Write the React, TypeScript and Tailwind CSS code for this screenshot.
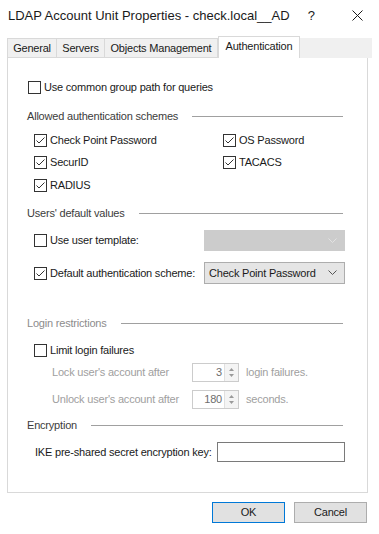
import React from "react";

const FONT = { fontFamily: '"Liberation Sans", Arial, sans-serif' };
const T = "text-[11px] tracking-[-0.2px] leading-none whitespace-nowrap";

function Box({ checked }: { checked?: boolean }) {
  return (
    <div className="w-[13px] h-[13px] border border-[#333333] bg-white shrink-0 flex items-center justify-center">
      {checked && (
        <svg width="11" height="11" viewBox="0 0 11 11">
          <polyline points="1.5,5.5 4,8 9.5,2.5" fill="none" stroke="#333333" strokeWidth="1" />
        </svg>
      )}
    </div>
  );
}

function Check({ label, checked, className = "" }: { label: string; checked?: boolean; className?: string }) {
  return (
    <div className={"flex items-center gap-[3px] " + className}>
      <Box checked={checked} />
      <span className={T + " text-[#1a1a1a]"}>{label}</span>
    </div>
  );
}

function Header({ label, className = "", textClass = "text-[#3c3c3c]" }: { label: string; className?: string; textClass?: string }) {
  return (
    <div className={"flex items-center h-[20px] ml-[19px] w-[316px] " + className}>
      <span className={T + " " + textClass}>{label}</span>
      <div className="flex-1 h-px bg-[#a0a0a0] ml-[14px]" />
    </div>
  );
}

function Chevron({ color }: { color: string }) {
  return (
    <svg width="9" height="6" viewBox="0 0 9 6">
      <polyline points="0.5,0.5 4.5,4.5 8.5,0.5" fill="none" stroke={color} strokeWidth="1" />
    </svg>
  );
}

function Spin({ value }: { value: string }) {
  return (
    <div className="w-[47px] h-[19px] border border-[#cccccc] bg-white flex">
      <div className={"flex-1 flex items-center justify-end pr-[2px] text-[#6d6d6d] " + T}>{value}</div>
      <div className="w-[14px] flex flex-col items-center justify-center gap-[3px] bg-[#f4f4f4] border-l border-[#e0e0e0]">
        <svg width="5" height="3" viewBox="0 0 5 3"><polygon points="0,3 2.5,0 5,3" fill="#9a9a9a" /></svg>
        <svg width="5" height="3" viewBox="0 0 5 3"><polygon points="0,0 2.5,3 5,0" fill="#9a9a9a" /></svg>
      </div>
    </div>
  );
}

export default function App() {
  return (
    <div className="w-[379px] h-[534px] bg-white overflow-hidden text-black" style={FONT}>
      {/* title bar */}
      <div className="h-[30px] flex items-center pl-[8px]">
        <span className="text-[13px] text-[#1a1a1a] leading-none whitespace-nowrap">LDAP Account Unit Properties - check.local__AD</span>
        <span className="ml-auto text-[13px] text-[#1a1a1a] leading-none">?</span>
        <svg className="ml-[37px] mr-[16px]" width="11" height="11" viewBox="0 0 11 11">
          <line x1="0.5" y1="0.5" x2="10.5" y2="10.5" stroke="#1a1a1a" strokeWidth="1" />
          <line x1="10.5" y1="0.5" x2="0.5" y2="10.5" stroke="#1a1a1a" strokeWidth="1" />
        </svg>
      </div>

      {/* tabs */}
      <div className="mt-[6px] ml-[7px] w-[365px] h-[22px] flex items-end relative">
        <div className="absolute left-0 right-0 bottom-0 h-[20px] bg-[#f0f0f0]" />
        <div className="relative flex items-end">
          <div className={"w-[50px] h-[20px] border border-[#d9d9d9] bg-[#f0f0f0] flex items-center justify-center text-[#1a1a1a] " + T}>General</div>
          <div className={"w-[48px] h-[20px] border border-l-0 border-[#d9d9d9] bg-[#f0f0f0] flex items-center justify-center text-[#1a1a1a] " + T}>Servers</div>
          <div className={"w-[113px] h-[20px] border border-l-0 border-[#d9d9d9] bg-[#f0f0f0] flex items-center justify-center text-[#1a1a1a] " + T}>Objects Management</div>
          <div className={"w-[82px] h-[22px] border border-b-0 border-[#d9d9d9] bg-white flex items-center justify-center pb-[2px] text-[#1a1a1a] z-10 " + T}>Authentication</div>
        </div>
      </div>

      {/* panel */}
      <div className="-mt-px ml-[7px] w-[361px] h-[436px] border border-[#d9d9d9] bg-white flex flex-col">
        <div className="mt-[19px] h-[20px] flex items-center ml-[20px]">
          <Check label="Use common group path for queries" />
        </div>

        <Header label="Allowed authentication schemes" className="mt-[9px]" />

        <div className="mt-[4px] h-[20px] flex items-center ml-[26px]">
          <Check label="Check Point Password" checked className="w-[189px]" />
          <Check label="OS Password" checked />
        </div>
        <div className="mt-[2px] h-[20px] flex items-center ml-[26px]">
          <Check label="SecurID" checked className="w-[189px]" />
          <Check label="TACACS" checked />
        </div>
        <div className="mt-[3px] h-[20px] flex items-center ml-[26px]">
          <Check label="RADIUS" checked />
        </div>

        <Header label="Users' default values" className="mt-[8px]" />

        <div className="mt-[7px] h-[21px] flex items-center ml-[26px]">
          <Check label="Use user template:" className="w-[170px]" />
          <div className="w-[141px] h-[21px] bg-[#cccccc] border border-[#cccccc] flex items-center justify-end pr-[7px]">
            <Chevron color="#e2e2e2" />
          </div>
        </div>
        <div className="mt-[11px] h-[22px] flex items-center ml-[26px]">
          <Check label="Default authentication scheme:" checked className="w-[170px]" />
          <div className="w-[141px] h-[22px] bg-[#e5e5e5] border border-[#adadad] flex items-center pl-[4px] pr-[7px]">
            <span className={T + " text-[#1a1a1a]"}>Check Point Password</span>
            <div className="ml-auto"><Chevron color="#555555" /></div>
          </div>
        </div>

        <Header label="Login restrictions" className="mt-[29px]" textClass="text-[#8c8c8c]" />

        <div className="mt-[7px] h-[20px] flex items-center ml-[26px]">
          <Check label="Limit login failures" />
        </div>
        <div className="mt-[2px] h-[20px] flex items-center ml-[44px]">
          <span className={"w-[140px] text-[#a0a0a0] " + T}>Lock user's account after</span>
          <Spin value="3" />
          <span className={"ml-[7px] text-[#a0a0a0] " + T}>login failures.</span>
        </div>
        <div className="mt-[7px] h-[20px] flex items-center ml-[44px]">
          <span className={"w-[140px] text-[#a0a0a0] " + T}>Unlock user's account after</span>
          <Spin value="180" />
          <span className={"ml-[7px] text-[#a0a0a0] " + T}>seconds.</span>
        </div>

        <Header label="Encryption" className="mt-[6px]" />

        <div className="mt-[7px] h-[20px] flex items-center ml-[27px]">
          <span className={"w-[182px] text-[#1a1a1a] " + T}>IKE pre-shared secret encryption key:</span>
          <div className="w-[128px] h-[20px] border border-[#7a7a7a] bg-white" />
        </div>
      </div>

      {/* buttons */}
      <div className="mt-[9px] flex justify-end gap-[9px] pr-[12px]">
        <div className={"w-[73px] h-[21px] bg-[#e1e1e1] border border-[#0078d7] flex items-center justify-center text-[#1a1a1a] " + T}>OK</div>
        <div className={"w-[73px] h-[21px] bg-[#e1e1e1] border border-[#adadad] flex items-center justify-center text-[#1a1a1a] " + T}>Cancel</div>
      </div>
    </div>
  );
}
